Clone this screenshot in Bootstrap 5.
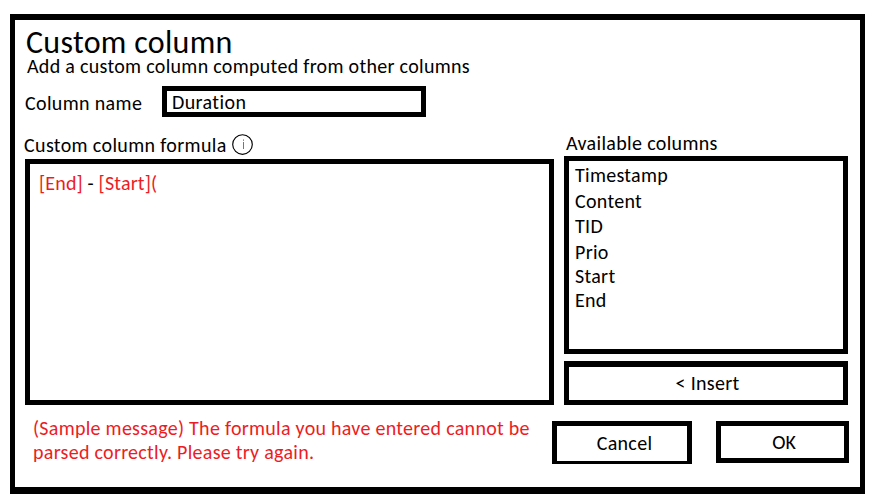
<!DOCTYPE html>
<html lang="en">
<head>
<meta charset="utf-8">
<meta name="viewport" content="width=device-width, initial-scale=1">
<title>Custom column</title>
<link rel="stylesheet" href="https://cdn.jsdelivr.net/npm/bootstrap@5.3.0/dist/css/bootstrap.min.css">
<style>
body{font:20px/24px Carlito,Calibri,Lato,sans-serif;letter-spacing:.3px;color:#000;background:#fff}
.dialog-page{width:877px;height:502px;padding:14px 12px 8px 10px}
.dialog-frame{border:solid #000;border-width:6px 5px 7px;padding:11px 12px 0 10px}
.box{border:5px solid #000;background:#fff}
.dialog-title{font-size:32px;line-height:24px;font-weight:400;margin:0 0 -1px;padding-left:1px}
.subtitle{padding-left:2px}
.name-row{margin-top:8px;height:31px}
.name-label{width:137px;letter-spacing:.35px;padding-top:5px}
.name-input{width:264px;height:31px;padding:0 5px;font:inherit;line-height:21px;letter-spacing:.4px;color:#000;border-radius:0;outline:0}
.work-area{margin-top:14px;height:274px;gap:10px}
.formula-col{width:529px;padding-top:2px}
.formula-label{height:26px;letter-spacing:.36px;gap:5px;margin-left:-1px}
.info-icon{width:22px;height:22px;display:block}
.formula-box{padding:7px 9px;letter-spacing:.17px}
.list-col{width:284px}
.list-label{height:25px;padding-left:2px;letter-spacing:.33px}
.column-list{height:198px;padding:2px 6px;margin:0;list-style:none}
.column-list li{height:24px}
.column-list li:nth-child(1),.column-list li:nth-child(3){height:26px}
.column-list li:nth-child(2){height:25px}
.box-btn{border:5px solid #000;border-radius:0;background:#fff;padding:0;font:inherit;letter-spacing:inherit;color:#000}
.insert-btn{height:44px;margin-top:7px;border-top-width:6px;padding:0 0 2px 3px}
.alarm{color:#ed1c24}
.message{width:525px;padding:11px 0 0 8px;letter-spacing:.28px}
.cancel-btn{width:140px;height:43px;border-bottom-width:3px;padding:0 0 2px 5px}
.ok-btn{width:133px;height:42px;margin-left:24px;letter-spacing:0;padding-left:3px}
.actions{padding-top:16px;margin-left:2px;margin-right:-1px}
</style>
</head>
<body>
<main class="dialog-page">
  <div class="dialog-frame h-100">
    <h1 class="dialog-title">Custom column</h1>
    <p class="subtitle mb-0">Add a custom column computed from other columns</p>
    <div class="name-row d-flex">
      <label class="name-label" for="colName">Column name</label>
      <input class="name-input box" id="colName" type="text" value="Duration">
    </div>
    <div class="work-area d-flex">
      <section class="formula-col d-flex flex-column">
        <div class="formula-label d-flex">
          <span>Custom column formula</span>
          <svg class="info-icon" viewBox="0 0 22 22" aria-hidden="true"><circle cx="10.5" cy="11.5" r="9.8" fill="none" stroke="#000" stroke-width="1.15"/><path d="M11.5 9v7M11.5 6.5v1.3" stroke="#4a7fae"/></svg>
        </div>
        <div class="formula-box box flex-grow-1"><span class="alarm">[End]</span> - <span class="alarm">[Start](</span></div>
      </section>
      <section class="list-col d-flex flex-column">
        <div class="list-label">Available columns</div>
        <ul class="column-list box">
          <li>Timestamp</li><li>Content</li><li>TID</li><li>Prio</li><li>Start</li><li>End</li>
        </ul>
        <button class="box-btn insert-btn" type="button">&lt; Insert</button>
      </section>
    </div>
    <div class="d-flex">
      <p class="message alarm mb-0 flex-shrink-0">(Sample message) The formula you have entered cannot be<br>parsed correctly. Please try again.</p>
      <div class="actions d-flex align-items-start flex-shrink-0">
        <button class="box-btn cancel-btn" type="button">Cancel</button>
        <button class="box-btn ok-btn" type="button">OK</button>
      </div>
    </div>
  </div>
</main>
<script src="https://cdn.jsdelivr.net/npm/bootstrap@5.3.0/dist/js/bootstrap.bundle.min.js"></script>
</body>
</html>
